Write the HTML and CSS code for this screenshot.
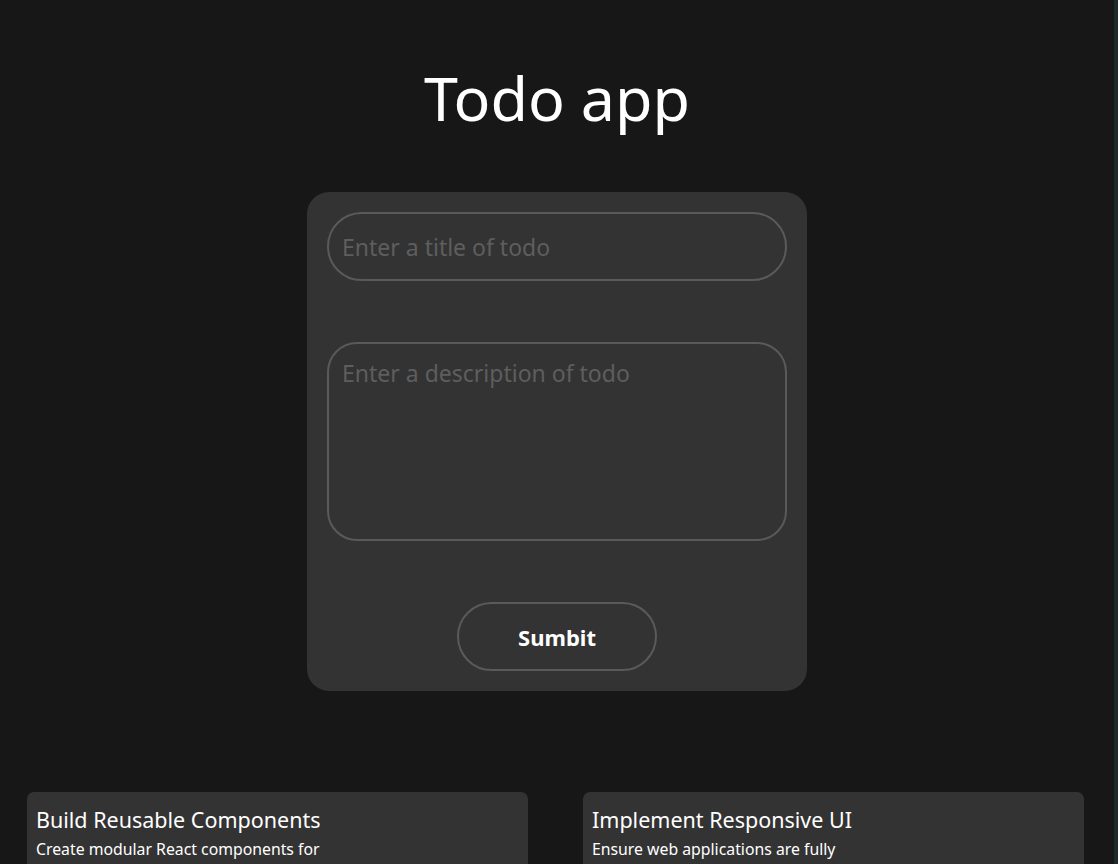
FILE: index.html
```html
<!DOCTYPE html>
<html lang="en">
<head>
    <meta charset="UTF-8">
    <meta name="viewport" content="width=device-width, initial-scale=1.0">
    <title>Todo app</title>
    <link rel="stylesheet" href="styles.css">
</head>
<body>
    <h1 class="title">Todo app</h1>

    <form class="todo-form" onsubmit="return false;">
        <input class="field" type="text" placeholder="Enter a title of todo">
        <textarea class="field area" placeholder="Enter a description of todo"></textarea>
        <button class="submit-btn" type="submit">Sumbit</button>
    </form>

    <div class="todo-list">
        <div class="todo-card">
            <h3>Build Reusable Components</h3>
            <p>Create modular React components for scalable and maintainable interfaces.</p>
        </div>
        <div class="todo-card">
            <h3>Implement Responsive UI</h3>
            <p>Ensure web applications are fully responsive across every screen size.</p>
        </div>
    </div>
</body>
</html>
```

FILE: styles.css
```css
body {
    margin: 0;
    background: #171717;
    color: #fff;
    font-family: "Segoe UI", "Noto Sans", sans-serif;
    border-right: 4px solid #1d2a2a;
    min-height: 100vh;
    box-sizing: border-box;
}
.title {
    margin: 0;
    padding-top: 57px;
    text-align: center;
    font-size: 61px;
    font-weight: 400;
    line-height: 82px;
}
.todo-form {
    width: 500px;
    box-sizing: border-box;
    margin: 53px auto 0;
    padding: 20px;
    background: #333;
    border-radius: 22px;
    display: flex;
    flex-direction: column;
    align-items: center;
    gap: 61px;
}
.field {
    width: 100%;
    box-sizing: border-box;
    height: 69px;
    padding: 0 13px;
    background: transparent;
    border: 2px solid #5a5a5a;
    border-radius: 35px;
    color: #ddd;
    font-family: inherit;
    font-size: 23px;
    outline: none;
}
.field::placeholder {
    color: #5e5e5e;
}
.area {
    height: 199px;
    padding-top: 13px;
    border-radius: 30px;
    resize: none;
}
.submit-btn {
    width: 200px;
    height: 69px;
    background: transparent;
    border: 2px solid #5a5a5a;
    border-radius: 35px;
    color: #fff;
    font-family: inherit;
    font-size: 22px;
    font-weight: 700;
}
.todo-list {
    display: grid;
    grid-template-columns: 501px 501px;
    gap: 55px;
    padding: 101px 0 0 27px;
}
.todo-card {
    background: #333;
    border-radius: 7px;
    padding: 12px 9px 10px;
}
.todo-card h3 {
    margin: 0;
    font-size: 21.5px;
    font-weight: 400;
    line-height: 31px;
}
.todo-card p {
    margin: 0;
    max-width: 320px;
    font-size: 15.8px;
    line-height: 29px;
}
```
